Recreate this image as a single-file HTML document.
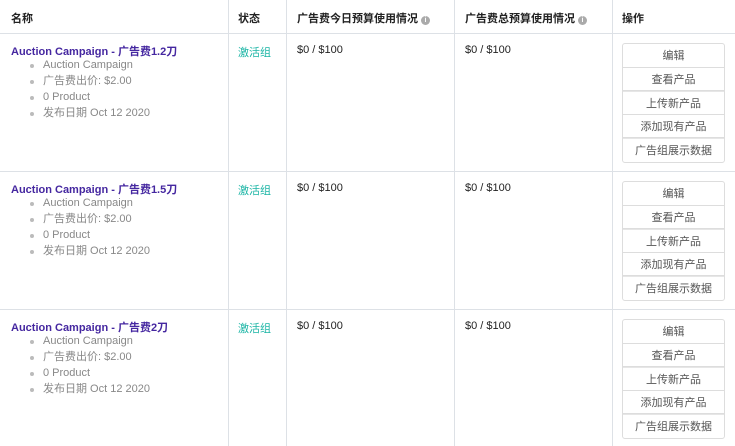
<!DOCTYPE html><html><head><meta charset="utf-8"><style>
*{margin:0;padding:0;box-sizing:border-box}
body{width:735px;height:446px;overflow:hidden;background:#fff;font-family:"Liberation Sans","Noto Sans CJK SC",sans-serif;font-size:11px;color:#222}
.vl{position:absolute;top:0;width:1px;height:446px;background:#dde1e6}
.hl{position:absolute;left:0;width:735px;height:1px;background:#dde1e6}
.h{position:absolute;top:10px;font-weight:bold;font-size:11px;color:#222}
.i{display:inline-block;width:9px;height:9px;border-radius:50%;background:#aaa;color:#fff;font-size:7px;text-align:center;line-height:9px;vertical-align:0px;margin-left:3px}
.t{position:absolute;left:11px;font-weight:bold;color:#4527a0}
ul{position:absolute;left:43px;list-style:none;color:#888}
li{height:16px;line-height:16px;position:relative}
li:before{content:"";position:absolute;left:-13px;top:7px;width:4px;height:4px;border-radius:50%;background:#bbb}
.s{position:absolute;left:238px;color:#1bb5a5}
.m{position:absolute;color:#222}
.b{position:absolute;left:622px;width:103px;border:1px solid #ddd;border-radius:3px}
.b div{height:23.6px;line-height:24px;text-align:center;color:#555;border-bottom:1px solid #ddd}
.b div:last-child{border-bottom:0}
.b div:nth-child(3),.b div:nth-child(5){border-top:1px solid #e6e6e6}
</style></head><body>
<div class="vl" style="left:228px"></div><div class="vl" style="left:286px"></div><div class="vl" style="left:454px"></div><div class="vl" style="left:612px"></div>
<div class="hl" style="top:33px"></div><div class="hl" style="top:171px"></div><div class="hl" style="top:309px"></div>
<div class="h" style="left:11px">名称</div><div class="h" style="left:238px">状态</div>
<div class="h" style="left:297px">广告费今日预算使用情况<span class="i">i</span></div>
<div class="h" style="left:465px">广告费总预算使用情况<span class="i">i</span></div>
<div class="h" style="left:622px">操作</div>

<div class="t" style="top:43px">Auction Campaign - 广告费1.2刀</div>
<ul style="top:57px"><li>Auction Campaign</li><li>广告费出价: $2.00</li><li>0 Product</li><li>发布日期 Oct 12 2020</li></ul>
<div class="s" style="top:44px">激活组</div><div class="m" style="left:297px;top:44px">$0 / $100</div><div class="m" style="left:465px;top:44px">$0 / $100</div>
<div class="b" style="top:43px"><div>编辑</div><div>查看产品</div><div>上传新产品</div><div>添加现有产品</div><div>广告组展示数据</div></div>

<div class="t" style="top:181px">Auction Campaign - 广告费1.5刀</div>
<ul style="top:195px"><li>Auction Campaign</li><li>广告费出价: $2.00</li><li>0 Product</li><li>发布日期 Oct 12 2020</li></ul>
<div class="s" style="top:182px">激活组</div><div class="m" style="left:297px;top:182px">$0 / $100</div><div class="m" style="left:465px;top:182px">$0 / $100</div>
<div class="b" style="top:181px"><div>编辑</div><div>查看产品</div><div>上传新产品</div><div>添加现有产品</div><div>广告组展示数据</div></div>

<div class="t" style="top:319px">Auction Campaign - 广告费2刀</div>
<ul style="top:333px"><li>Auction Campaign</li><li>广告费出价: $2.00</li><li>0 Product</li><li>发布日期 Oct 12 2020</li></ul>
<div class="s" style="top:320px">激活组</div><div class="m" style="left:297px;top:320px">$0 / $100</div><div class="m" style="left:465px;top:320px">$0 / $100</div>
<div class="b" style="top:319px"><div>编辑</div><div>查看产品</div><div>上传新产品</div><div>添加现有产品</div><div>广告组展示数据</div></div>
</body></html>
